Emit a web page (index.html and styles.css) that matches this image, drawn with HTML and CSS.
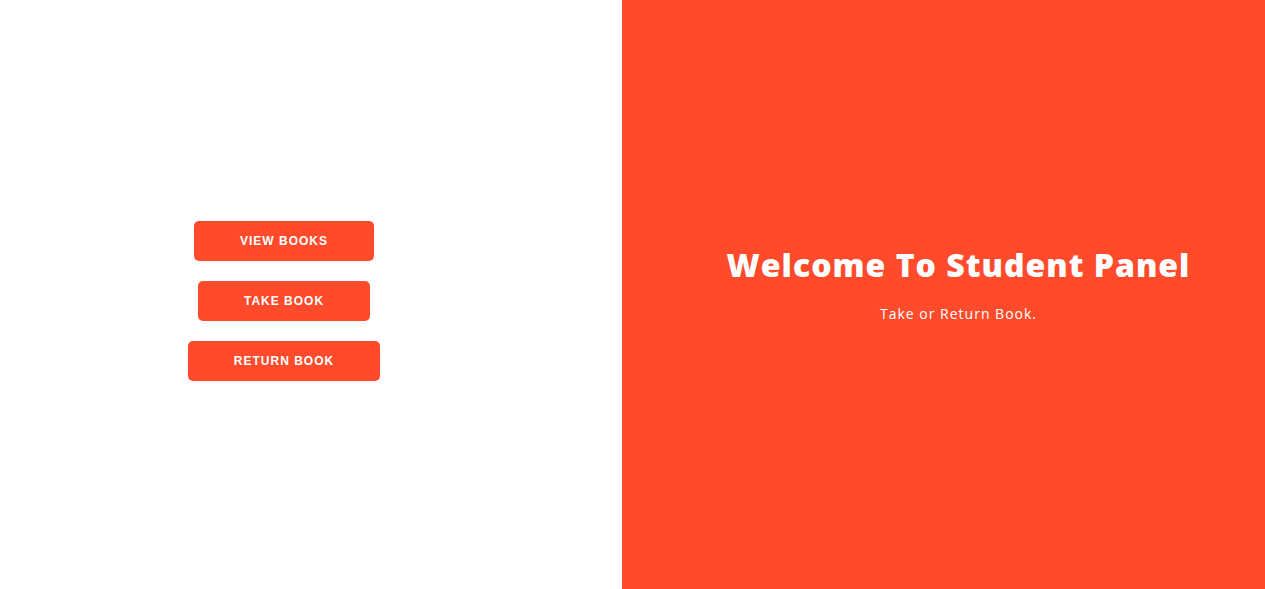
FILE: index.html
```html
<!DOCTYPE html>
<html>
<head>
<meta charset="utf-8">
<link rel="stylesheet" href="styles.css">
</head>
<body>
<div class="page">
  <div class="left">
    <div class="actions">
      <button class="btn">View Books</button>
      <button class="btn">Take Book</button>
      <button class="btn">Return Book</button>
    </div>
  </div>
  <div class="right">
    <h1 class="title">Welcome To Student Panel</h1>
    <p class="sub">Take or Return Book.</p>
  </div>
</div>
</body>
</html>
```
FILE: styles.css
```css
* { box-sizing: border-box; }
html, body { margin: 0; height: 100%; }
body { font-family: "Open Sans", "Liberation Sans", sans-serif; background: #fff; }
.page {
  display: grid;
  grid-template-columns: 622px 1fr;
  height: 589px;
}
.left {
  display: flex;
  align-items: center;
  justify-content: center;
  padding: 13px 54px 0 0;
}
.actions {
  display: flex;
  flex-direction: column;
  align-items: center;
  gap: 20px;
}
.btn {
  font-family: "Liberation Sans", Arial, sans-serif;
  font-weight: bold;
  font-size: 12px;
  letter-spacing: 1px;
  text-transform: uppercase;
  color: #fff;
  background: #ff4b2b;
  border: none;
  border-radius: 5px;
  height: 40px;
  padding: 0 46px;
}
.right {
  background: #ff4b2b;
  color: #fff;
  display: flex;
  flex-direction: column;
  align-items: center;
  justify-content: center;
  padding: 0 0 20px 30px;
}
.title {
  font-family: "Open Sans", sans-serif;
  font-weight: 800;
  font-size: 32px;
  letter-spacing: 1px;
  margin: 0;
  line-height: 1.2;
}
.sub {
  font-size: 14px;
  margin: 20px 0 0;
  letter-spacing: 1px;
}
```
